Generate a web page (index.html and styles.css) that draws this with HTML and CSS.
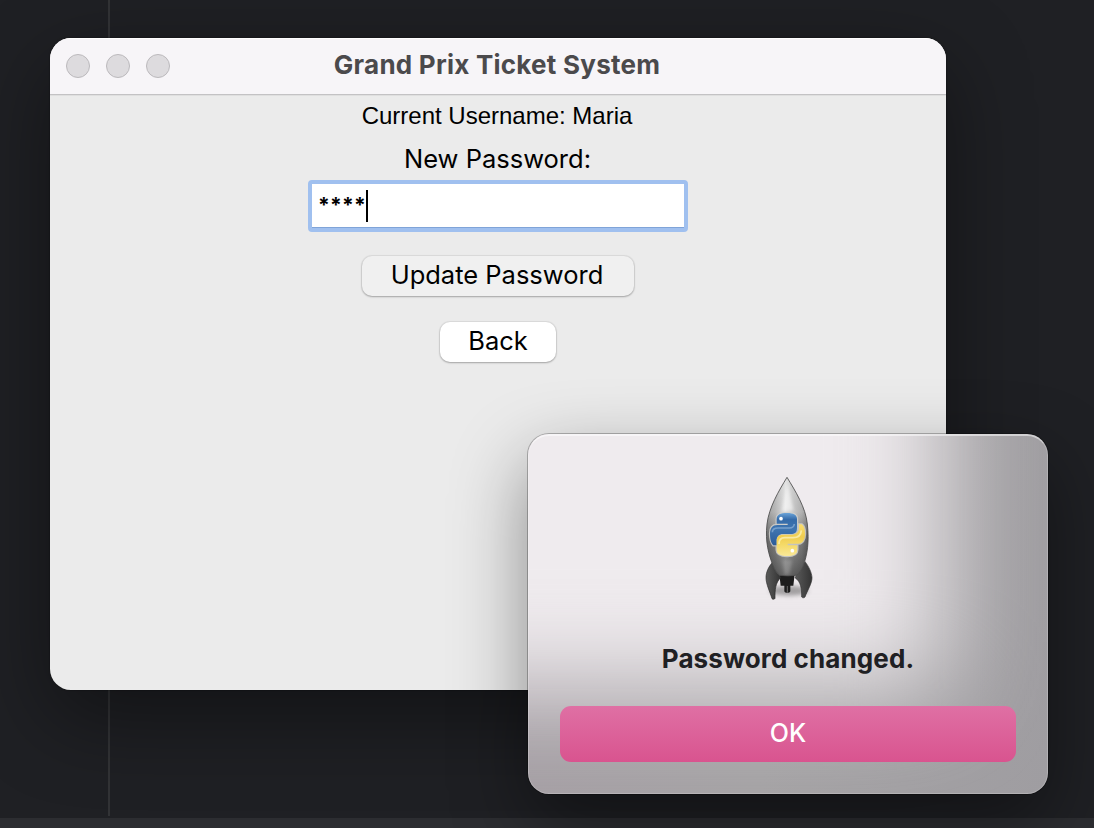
FILE: index.html
```html
<!DOCTYPE html>
<html lang="en">
<head>
<meta charset="utf-8">
<title>Grand Prix Ticket System</title>
<link rel="stylesheet" href="styles.css">
</head>
<body>
<div class="desktop">
  <div class="guide"></div>
  <div class="bottom-strip"></div>

  <main class="window">
    <header class="titlebar">
      <div class="lights"><span class="light"></span><span class="light"></span><span class="light"></span></div>
      <h1 class="title"><span>Grand Prix Ticket System</span></h1>
    </header>
    <form class="form">
      <p class="username"><span>Current Username: Maria</span></p>
      <p class="label"><span>New Password:</span></p>
      <div class="field"><span class="stars">****</span><span class="caret"></span></div>
      <button class="btn btn-update" type="button"><span>Update Password</span></button>
      <button class="btn btn-back" type="button"><span>Back</span></button>
    </form>
  </main>

  <section class="dialog" role="alertdialog">
    <div class="glow"></div>
    <div class="dialog-body">
      <svg class="rocket" viewBox="0 0 270 435" width="90" height="145">
        <defs>
          <linearGradient id="hull" x1="0" x2="1"><stop offset="0" stop-color="#777"/><stop offset=".22" stop-color="#9c9c9c"/><stop offset=".46" stop-color="#d4d4d4"/><stop offset=".62" stop-color="#b4b4b4"/><stop offset=".85" stop-color="#929292"/><stop offset="1" stop-color="#666"/></linearGradient>
          <linearGradient id="shade" x1="0" y1="0" x2="0" y2="1"><stop offset="0" stop-color="#fff" stop-opacity=".35"/><stop offset=".35" stop-color="#fff" stop-opacity=".28"/><stop offset=".6" stop-color="#444" stop-opacity=".3"/><stop offset="1" stop-color="#222" stop-opacity=".6"/></linearGradient>
          <linearGradient id="blue" x1="0" y1="0" x2="0" y2="1"><stop offset="0" stop-color="#6aa3d8"/><stop offset=".2" stop-color="#356ba9"/><stop offset=".5" stop-color="#3f75b0"/><stop offset="1" stop-color="#2c5c98"/></linearGradient>
          <linearGradient id="gold" x1="0" y1="0" x2="0" y2="1"><stop offset="0" stop-color="#f9dc6d"/><stop offset=".4" stop-color="#f0cd50"/><stop offset=".65" stop-color="#f5da68"/><stop offset="1" stop-color="#f9e898"/></linearGradient>
          <linearGradient id="fin" x1="0" x2="1"><stop offset="0" stop-color="#5a5a5a"/><stop offset="1" stop-color="#333"/></linearGradient>
          <filter id="soft" x="-30%" y="-100%" width="160%" height="300%"><feGaussianBlur stdDeviation="7"/></filter>
          <filter id="halo" x="-20%" y="-20%" width="140%" height="140%"><feGaussianBlur stdDeviation="2"/></filter>
          <filter id="sheen" x="-80%" y="-20%" width="260%" height="140%"><feGaussianBlur stdDeviation="5"/></filter>
        </defs>
        <ellipse cx="132" cy="377" rx="58" ry="15" fill="#555" opacity=".5" filter="url(#soft)"/>
        <path d="M103 328h46l-4 34h-9v17c-2 6-16 6-18 0v-17h-11z" fill="#1d1d1d"/>
        <path d="M127 363v20" stroke="#6a6a6a" stroke-width="3"/>
        <path d="M83 292C70 305 63 323 63 338c0 20 12 42 18 63 3 3 8 2 9-1 0-25 1-47 17-62z" fill="url(#fin)" stroke="#2b2b2b" stroke-width="2"/>
        <path d="M180 290c11 14 20 32 21 48 0 18-15 40-21 58-2 3-8 3-10 0 0-25-2-46-20-58z" fill="url(#fin)" stroke="#333" stroke-width="2"/>
        <path d="M126 37C151 78 182 127 187 177c6 54 0 91-12 125-5 12-11 22-20 29q-26 3-51 0c-9-7-15-17-20-29-13-34-24-71-18-125 6-50 35-99 60-140z" fill="url(#hull)"/>
        <path d="M126 37C151 78 182 127 187 177c6 54 0 91-12 125-5 12-11 22-20 29q-26 3-51 0c-9-7-15-17-20-29-13-34-24-71-18-125 6-50 35-99 60-140z" fill="url(#shade)" stroke="#4b4b4b" stroke-width="2.5"/>
        <path d="M127 55L110 138l36-2z" fill="#fff" opacity=".5" filter="url(#sheen)"/>
        <path d="M112 286l7 42h14l9-42z" fill="#bbb" opacity=".3" filter="url(#sheen)"/>
        <g stroke="#d2d2cf" stroke-width="7" opacity=".8" filter="url(#halo)" fill="none">
          <path d="M95 163c0-15 12-19 31-19 20 0 30 6 30 18v27c0 14-7 18-19 18h-23c-12 0-19 8-19 19v15H85c-7-9-10-18-10-35 0-17 8-26 22-26h31v-4H95z"/>
          <path d="M162 178h8c7 4 10 15 10 28 0 19-8 30-20 30h-32v5h29v13c0 14-12 19-30 19-20 0-32-6-32-18v-28c0-12 8-18 19-18h27c13 0 21-8 21-19z"/>
        </g>
        <path d="M95 163c0-15 12-19 31-19 20 0 30 6 30 18v27c0 14-7 18-19 18h-23c-12 0-19 8-19 19v15H85c-7-9-10-18-10-35 0-17 8-26 22-26h31v-4H95z" fill="url(#blue)"/>
        <path d="M162 178h8c7 4 10 15 10 28 0 19-8 30-20 30h-32v5h29v13c0 14-12 19-30 19-20 0-32-6-32-18v-28c0-12 8-18 19-18h27c13 0 21-8 21-19z" fill="url(#gold)"/>
        <path d="M82 202c0-10 7-13 17-13h34c9 0 14-4 15-12" fill="none" stroke="#9bbde0" stroke-width="5" opacity=".6" filter="url(#halo)"/>
        <path d="M102 237c0-14 5-19 17-19h25c15 0 24-5 25-22" fill="none" stroke="#fff7c4" stroke-width="5" opacity=".7" filter="url(#halo)"/>
        <circle cx="108" cy="161" r="5.5" fill="#fff"/><circle cx="142" cy="257" r="5.5" fill="#fff"/>
      </svg>
      <p class="message"><span>Password changed.</span></p>
      <button class="ok" type="button"><span>OK</span></button>
    </div>
  </section>
</div>
</body>
</html>
```
FILE: styles.css
```css
* { box-sizing: border-box; }
body { margin: 0; font-family: Inter, "Liberation Sans", sans-serif; }
p, h1 { margin: 0; }
button { border: 0; padding: 0; font: inherit; }
.desktop { position: relative; width: 1094px; height: 828px; overflow: hidden; background: #1f2024; }
.guide { position: absolute; left: 108px; top: 0; width: 2px; height: 816px; background: #323336; }
.bottom-strip { position: absolute; left: 0; right: 0; bottom: 0; height: 10px; background: #2c2d31; }

.window {
  position: absolute; left: 50px; top: 38px; width: 896px; height: 652px;
  border-radius: 21px; background: #ebebeb; overflow: clip;
  box-shadow: 0 28px 84px rgba(0,0,0,.42), 0 0 2px rgba(0,0,0,.5);
}
.titlebar {
  display: grid; grid-template-columns: 136px 1fr 136px; align-items: center;
  height: 58px; padding-bottom: 4px; background: #f7f5f8;
  border-bottom: 1px solid #dfdfdf; box-shadow: inset 0 -1px #c3c2c4, inset 0 1px #fff;
}
.lights { display: flex; gap: 16px; padding: 2px 0 0 16px; }
.light { width: 24px; height: 24px; border-radius: 50%; background: #dddbde; border: 1px solid #bbb9bc; }
.title { font-size: 26px; line-height: 30px; font-weight: 700; color: #4b4a4c; text-align: center; letter-spacing: .24px; padding-right: 2px; white-space: nowrap; }
.form { display: flex; flex-direction: column; align-items: center; color: #000; }
.username { font: 24px/28px "Liberation Sans", Arial, sans-serif; margin-top: 6px; padding-right: 2px; }
.label { font-size: 25.5px; line-height: 30px; margin-top: 14px; padding-right: 1px; }
.field {
  display: flex; width: 380px; height: 52px; margin-top: 6px; padding: 6px 7px 6px 6px;
  border: 4px solid #a0c0ef; border-radius: 4px; background: #fff;
  box-shadow: inset 0 -1px #80a4d8;
}
.stars { font-size: 21px; line-height: 32px; width: 48px; font-weight: 700; white-space: nowrap; letter-spacing: .25px; }
.caret { width: 2px; height: 32px; background: #000; }
.btn { height: 40px; border-radius: 10px; font-size: 25.5px; line-height: 38px; padding-bottom: 2px; color: #000; box-shadow: 0 0 1px 1px rgba(0,0,0,.07), 0 1px 2px rgba(0,0,0,.25); }
.btn-update { width: 272px; margin-top: 24px; background: #f0f0f0; padding-right: 2px; }
.btn-back { width: 116px; margin-top: 26px; background: #fff; }

.dialog {
  position: absolute; left: 528px; top: 434px; width: 520px; height: 360px;
  border-radius: 21px; overflow: clip; background: linear-gradient(100deg, #a69fa5, #a5a3a5 50%, #9f9da1);
  box-shadow: 0 0 0 1px rgba(0,0,0,.25), 0 28px 76px rgba(0,0,0,.42);
}
.dialog::after { content: ""; position: absolute; inset: 0; border-radius: inherit; border: 1px solid rgba(255,255,255,.2); border-top: 2px solid rgba(255,255,255,.5); pointer-events: none; }
.glow { position: absolute; left: -240px; top: -240px; width: 655px; height: 495px; background: #efebee; filter: blur(50px); }
.dialog-body { position: relative; display: flex; flex-direction: column; align-items: center; padding: 31px 32px; }
.rocket { display: block; margin-left: 4px; }
.message { margin-top: 34px; font-size: 26px; line-height: 30px; font-weight: 700; letter-spacing: .1px; color: #202023; white-space: nowrap; }
.ok { width: 456px; height: 56px; margin-top: 32px; padding-bottom: 2px; border-radius: 11px; color: #fff; font-size: 25px; font-weight: 500; background: linear-gradient(#df70a4, #d9548f); }
```
